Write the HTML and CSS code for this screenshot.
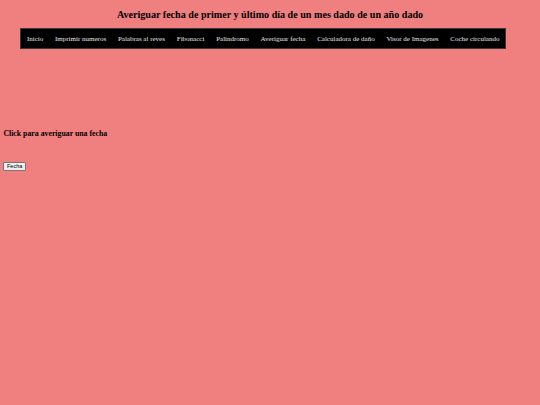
FILE: index.html
```html
<!DOCTYPE html>
<html lang="es">
<head>
<meta charset="utf-8">
<title>Averiguar fecha</title>
<link rel="stylesheet" href="styles.css">
</head>
<body>
<h2 class="title">Averiguar fecha de primer y último día de un mes dado de un año dado</h2>
<ul class="nav">
  <li><a href="#">Inicio</a></li>
  <li><a href="#">Imprimir numeros</a></li>
  <li><a href="#">Palabras al reves</a></li>
  <li><a href="#">Fibonacci</a></li>
  <li><a href="#">Palindromo</a></li>
  <li><a href="#">Averiguar fecha</a></li>
  <li><a href="#">Calculadora de daño</a></li>
  <li><a href="#">Visor de Imagenes</a></li>
  <li><a href="#">Coche circulando</a></li>
</ul>
<h3 class="prompt">Click para averiguar una fecha</h3>
<button class="btn">Fecha</button>
</body>
</html>
```
FILE: styles.css
```css
html, body {
  background: #f08080;
}
body {
  margin: 3.4px;
  font-family: "Liberation Serif", "Times New Roman", serif;
  font-size: 7px;
  color: #000;
}
.title {
  font-size: 10.1px;
  font-weight: bold;
  text-align: center;
  margin: 6px 0 0 0;
  line-height: 12px;
}
.nav {
  list-style: none;
  display: flex;
  width: max-content;
  margin: 7px 0 0 16.6px;
  padding: 0;
  background: #000;
  border: 1px solid #3a3a3a;
}
.nav li a {
  display: block;
  padding: 5.5px 5.9px;
  line-height: 8px;
  white-space: nowrap;
  color: #e6e6e6;
  text-decoration: none;
}
.prompt {
  font-size: 7.8px;
  font-weight: bold;
  margin: 80px 0 0 0;
  line-height: 10px;
}
.btn {
  display: block;
  margin-top: 23px;
  font-family: "Liberation Sans", Arial, sans-serif;
  font-size: 5.6px;
  padding: 0 2.5px;
  line-height: 7px;
  background: #efefef;
  border: 1px solid #767676;
  border-radius: 1px;
  color: #000;
}
```
